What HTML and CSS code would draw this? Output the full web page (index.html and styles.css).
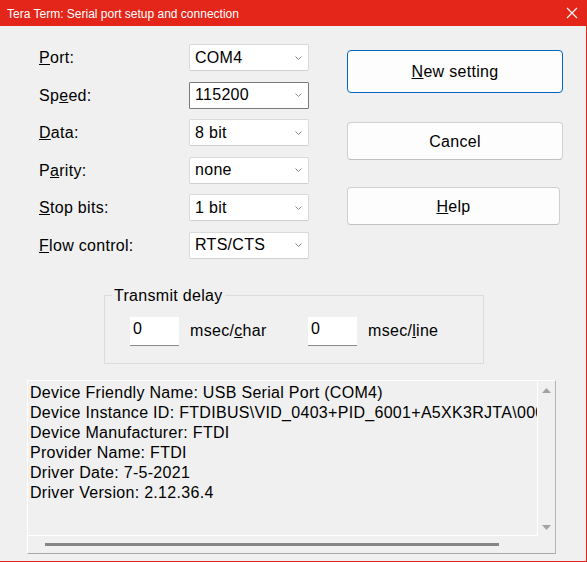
FILE: index.html
```html
<!DOCTYPE html>
<html>
<head>
<meta charset="utf-8">
<link rel="stylesheet" href="styles.css">
</head>
<body>
<div class="window">
  <div class="titlebar">
    <span class="title">Tera Term: Serial port setup and connection</span>
    <svg class="close" width="12" height="12" viewBox="0 0 12 12"><path d="M1 1L11 11M11 1L1 11" stroke="#fff" stroke-width="1.1" fill="none"/></svg>
  </div>
  <div class="body">
    <div class="top">
      <div class="form">
        <span class="lbl"><u>P</u>ort:</span>
        <div class="combo"><span>COM4</span><svg class="chev" width="7" height="4" viewBox="0 0 7 4"><path d="M0.5 0.5L3.5 3.5L6.5 0.5" stroke="#8a8a8a" fill="none"/></svg></div>
        <span class="lbl">Sp<u>e</u>ed:</span>
        <div class="combo focus"><span>115200</span><svg class="chev" width="7" height="4" viewBox="0 0 7 4"><path d="M0.5 0.5L3.5 3.5L6.5 0.5" stroke="#8a8a8a" fill="none"/></svg></div>
        <span class="lbl"><u>D</u>ata:</span>
        <div class="combo"><span>8 bit</span><svg class="chev" width="7" height="4" viewBox="0 0 7 4"><path d="M0.5 0.5L3.5 3.5L6.5 0.5" stroke="#8a8a8a" fill="none"/></svg></div>
        <span class="lbl">P<u>a</u>rity:</span>
        <div class="combo"><span>none</span><svg class="chev" width="7" height="4" viewBox="0 0 7 4"><path d="M0.5 0.5L3.5 3.5L6.5 0.5" stroke="#8a8a8a" fill="none"/></svg></div>
        <span class="lbl"><u>S</u>top bits:</span>
        <div class="combo"><span>1 bit</span><svg class="chev" width="7" height="4" viewBox="0 0 7 4"><path d="M0.5 0.5L3.5 3.5L6.5 0.5" stroke="#8a8a8a" fill="none"/></svg></div>
        <span class="lbl"><u>F</u>low control:</span>
        <div class="combo"><span>RTS/CTS</span><svg class="chev" width="7" height="4" viewBox="0 0 7 4"><path d="M0.5 0.5L3.5 3.5L6.5 0.5" stroke="#8a8a8a" fill="none"/></svg></div>
      </div>
      <div class="buttons">
        <div class="btn default"><span><u>N</u>ew setting</span></div>
        <div class="btn cancel"><span>Cancel</span></div>
        <div class="btn help"><span><u>H</u>elp</span></div>
      </div>
    </div>
    <fieldset class="delay">
      <legend>Transmit delay</legend>
      <div class="delay-row">
        <div class="edit">0</div>
        <span class="unit unit1">msec/<u>c</u>har</span>
        <div class="edit">0</div>
        <span class="unit">msec/<u>l</u>ine</span>
      </div>
    </fieldset>
    <div class="info">
      <div class="info-text">
        <div>Device Friendly Name: USB Serial Port (COM4)</div>
        <div>Device Instance ID: FTDIBUS\VID_0403+PID_6001+A5XK3RJTA\0000</div>
        <div>Device Manufacturer: FTDI</div>
        <div>Provider Name: FTDI</div>
        <div>Driver Date: 7-5-2021</div>
        <div>Driver Version: 2.12.36.4</div>
      </div>
      <div class="vscroll">
        <svg width="9" height="5" viewBox="0 0 9 5"><path d="M0 5L4.5 0L9 5Z" fill="#a3a3a3"/></svg>
        <svg width="9" height="5" viewBox="0 0 9 5"><path d="M0 0L4.5 5L9 0Z" fill="#a3a3a3"/></svg>
      </div>
      <div class="hscroll"><div class="thumb"></div></div>
      <div class="corner"></div>
    </div>
  </div>
</div>
</body>
</html>
```

FILE: styles.css
```css
html, body {
  margin: 0;
  padding: 0;
}
body {
  font-family: "Liberation Sans", Arial, sans-serif;
  font-size: 16px;
  color: #000;
}
.window {
  width: 587px;
  height: 562px;
  display: flex;
  flex-direction: column;
  background: #e32619;
}
.titlebar {
  height: 26px;
  flex: none;
  display: flex;
  align-items: center;
  justify-content: space-between;
  padding: 0 9px 0 7px;
}
.title {
  color: #fff;
  font-size: 12px;
  padding-top: 1px;
}
.close {
  display: block;
}
.body {
  flex: 1;
  background: #f0f0f0;
  margin: 0 1px 1px 0;
  display: flex;
  flex-direction: column;
  letter-spacing: 0.3px;
}
.top {
  display: flex;
  margin-top: 18px;
  margin-left: 39px;
}
.form {
  display: grid;
  grid-template-columns: 150px 120px;
  grid-auto-rows: 27px;
  row-gap: 10.6px;
  align-items: center;
}
.lbl {
  line-height: 27px;
}
.combo {
  height: 27px;
  box-sizing: border-box;
  background: #fff;
  border: 1px solid #dadada;
  border-bottom-color: #cfcfcf;
  border-radius: 2px;
  display: flex;
  align-items: center;
  justify-content: space-between;
  padding: 0 6px 0 5px;
}
.combo.focus {
  border-color: #7a7a7a;
  border-radius: 1px;
}
.chev {
  display: block;
}
.buttons {
  margin-left: 38px;
  margin-top: 6px;
  display: flex;
  flex-direction: column;
}
.btn {
  box-sizing: border-box;
  background: #fdfdfd;
  border: 1px solid #d0d0d0;
  border-bottom-color: #c0c0c0;
  border-radius: 4px;
  display: flex;
  align-items: center;
  justify-content: center;
  width: 216px;
  padding-top: 1px;
}
.btn.default {
  height: 43px;
  border: 1px solid #0067c0;
}
.btn.cancel {
  height: 38px;
  margin-top: 29px;
}
.btn.help {
  height: 38px;
  margin-top: 27px;
  width: 213px;
}
.delay {
  margin: 28px 0 0 104px;
  width: 380px;
  height: 77px;
  box-sizing: border-box;
  padding: 0;
  border: 1px solid #dcdcdc;
}
.delay legend {
  padding: 0 2px;
  margin-left: 7px;
  line-height: 18px;
}
.delay-row {
  display: flex;
  align-items: center;
  margin-top: 12px;
  margin-left: 25px;
}
.edit {
  width: 49px;
  height: 29px;
  box-sizing: border-box;
  background: #fff;
  border-bottom: 1px solid #8a8a8a;
  padding: 3px 0 0 3px;
  line-height: 18px;
}
.unit {
  margin-left: 11px;
}
.unit1 {
  width: 118px;
}
.info {
  margin: 16px 0 0 27px;
  width: 529px;
  height: 174px;
  box-sizing: border-box;
  border: 1px solid #ffffff;
  border-right-color: #b4b4b4;
  border-bottom-color: #a8a8a8;
  display: grid;
  grid-template-columns: 1fr 17px;
  grid-template-rows: 1fr 17px;
}
.info-text {
  overflow: hidden;
  white-space: nowrap;
  padding: 2px 0 0 2px;
  line-height: 20px;
  border-right: 1px solid #fff;
  border-bottom: 1px solid #fff;
}
.vscroll {
  display: flex;
  flex-direction: column;
  justify-content: space-between;
  align-items: center;
  padding: 7px 0 6px 0;
}
.vscroll svg {
  display: block;
}
.hscroll {
  display: flex;
  align-items: center;
  padding-left: 17px;
}
.thumb {
  width: 454px;
  height: 3px;
  background: #858585;
}
.corner {
  background: #f0f0f0;
}
```
